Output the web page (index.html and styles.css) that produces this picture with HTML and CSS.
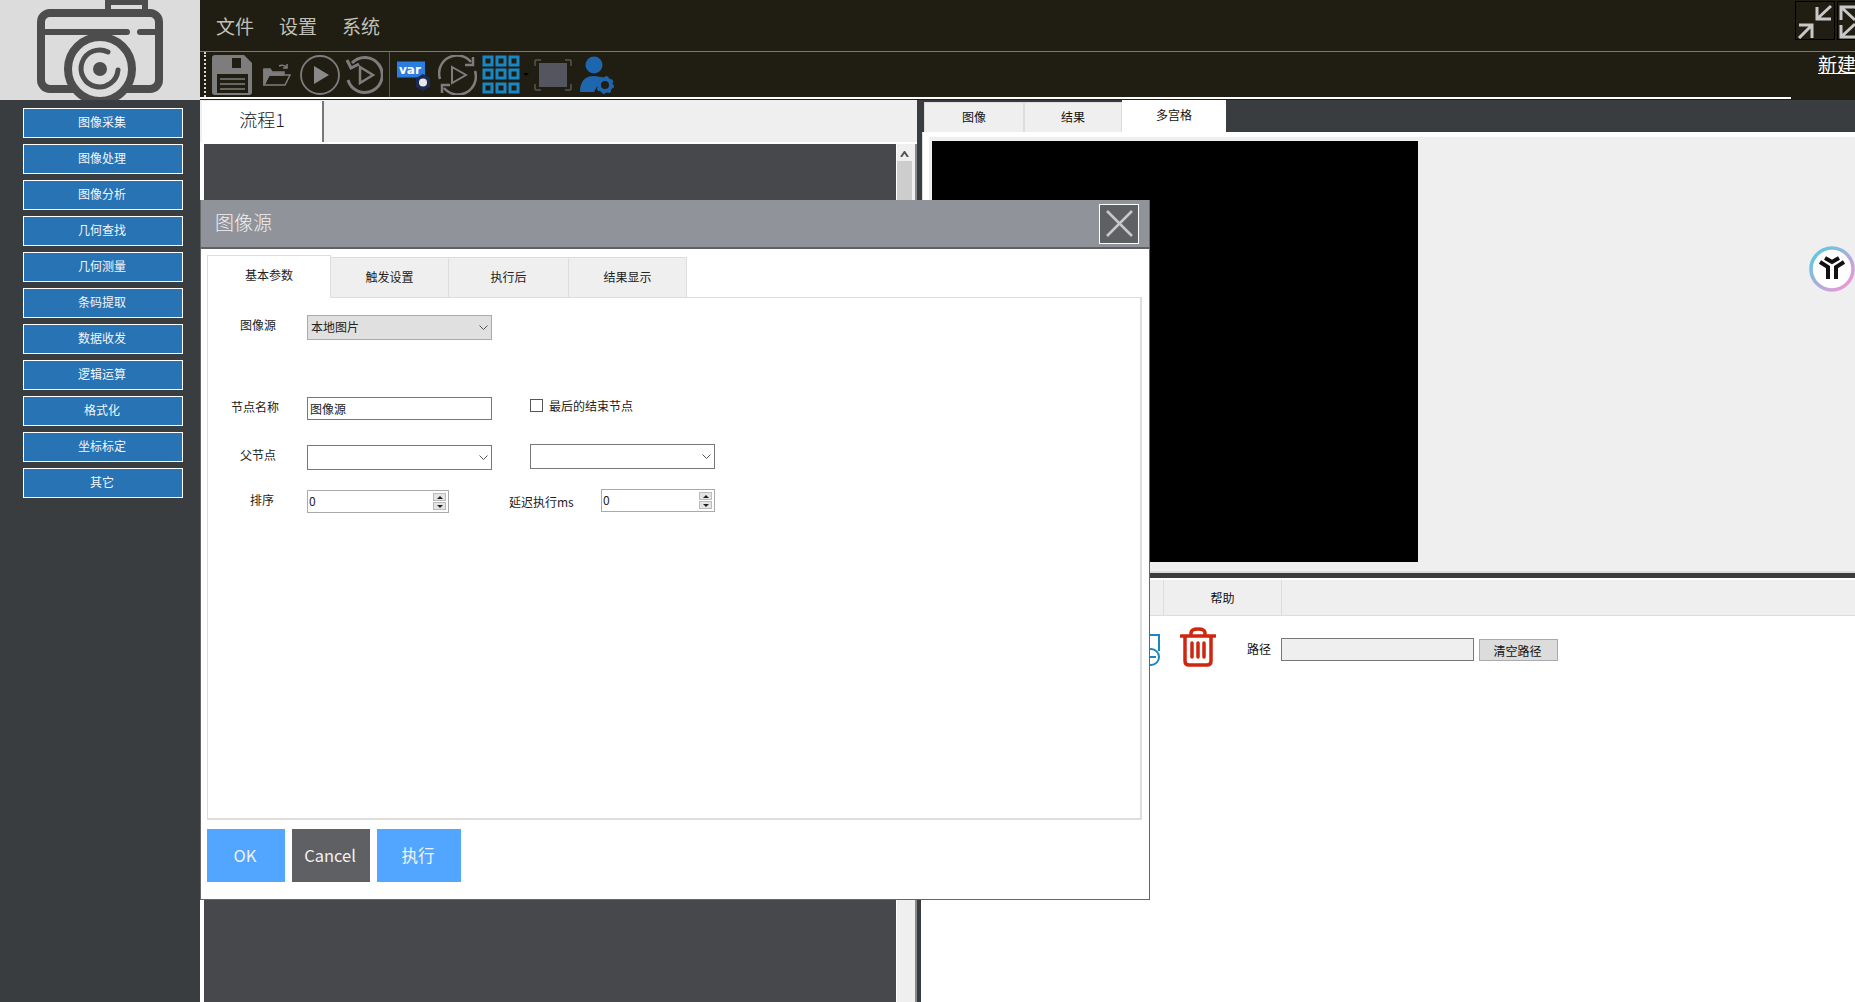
FILE: index.html
```html
<!DOCTYPE html>
<html lang="zh-CN">
<head>
    <meta charset="UTF-8">
    <title>图像源</title>
    <link rel="stylesheet" href="styles.css">
</head>
<body>
    <div class="app">
        <aside class="sidebar">
            <div class="logo">
                <svg width="200" height="100" viewBox="0 0 200 100" fill="none" stroke="#4d4d4d">
                    <path d="M108 9V2H145V9" stroke-width="6"/>
                    <rect x="41" y="13" width="118" height="76" rx="9" stroke-width="8"/>
                    <path d="M45 32H127M140 32H155" stroke-width="6" stroke-linecap="round"/>
                    <circle cx="100" cy="69" r="32" fill="#dcdcdc" stroke-width="8"/>
                    <path d="M108 52A18.500 18.500 0 1 0 118 70" stroke-width="5" stroke-linecap="round"/>
                    <circle cx="100" cy="69" r="7" fill="#4d4d4d" stroke="none"/>
                </svg>
            </div>
            <nav class="tool-list">
                <button class="tool-btn">图像采集</button>
                <button class="tool-btn">图像处理</button>
                <button class="tool-btn">图像分析</button>
                <button class="tool-btn">几何查找</button>
                <button class="tool-btn">几何测量</button>
                <button class="tool-btn">条码提取</button>
                <button class="tool-btn">数据收发</button>
                <button class="tool-btn">逻辑运算</button>
                <button class="tool-btn">格式化</button>
                <button class="tool-btn">坐标标定</button>
                <button class="tool-btn">其它</button>
            </nav>
        </aside>

        <div class="main">
            <header class="header">
                <div class="menubar">
                    <a class="menu-item">文件</a>
                    <a class="menu-item">设置</a>
                    <a class="menu-item">系统</a>
                    <div class="win-btns">
                        <button class="win-btn">
                            <svg width="38" height="37" viewBox="0 0 38 37" fill="none" stroke="#c8c8c8" stroke-width="3">
                                <path d="M21 5V17H35M21 17L35 4"/>
                                <path d="M3 23H16V36M16 23L3 36"/>
                            </svg>
                        </button>
                        <button class="win-btn">
                            <svg width="38" height="37" viewBox="0 0 38 37" fill="none" stroke="#c8c8c8" stroke-width="3">
                                <path d="M3 18V5H17M3 5L17 18"/>
                                <path d="M3 23V35H17M3 35L17 22"/>
                            </svg>
                        </button>
                    </div>
                </div>
                <div class="toolbar">
                    <span class="grip"></span>
                    <svg class="ic ic-save" width="40" height="40" viewBox="0 0 40 40">
                        <path d="M3 0H32L40 8V37Q40 40 37 40H3Q0 40 0 37V3Q0 0 3 0Z" fill="#7d7d7d"/>
                        <rect x="20" y="3" width="9" height="10" fill="#201e12"/>
                        <rect x="5" y="19" width="31" height="19" fill="#201e12"/>
                        <path d="M8 24H33M8 29H33M8 34H33" stroke="#7d7d7d" stroke-width="1.500"/>
                    </svg>
                    <svg class="ic ic-open" width="28" height="24" viewBox="0 0 28 24" fill="none" stroke="#7d7d7d" stroke-width="1.500">
                        <path d="M1 22V6H7L9 9H21V12"/>
                        <path d="M1 22L6 12H27L22 22Z" fill="#201e12"/>
                        <path d="M16 3Q21 1 24 5M24 1V5H20"/>
                        <path d="M1 22V7H7L9 10H20V12H6Z" fill="#7d7d7d"/>
                    </svg>
                    <svg class="ic ic-play" width="40" height="40" viewBox="0 0 40 40" fill="none">
                        <circle cx="20" cy="20" r="19" stroke="#7d7d7d" stroke-width="1.800"/>
                        <path d="M14 11L29 20L14 29Z" fill="#8a8a8a"/>
                    </svg>
                    <svg class="ic ic-replay" width="38" height="40" viewBox="0 0 38 40" fill="none" stroke="#7d7d7d" stroke-width="3">
                        <path d="M7 8A17.500 17.500 0 1 1 3 25"/>
                        <path d="M2 5L6 13L14 9"/>
                        <path d="M15 12L28 20L15 28Z" stroke-width="2.500"/>
                    </svg>
                    <span class="tool-sep"></span>
                    <svg class="ic ic-var" width="37" height="32" viewBox="0 0 37 32">
                        <rect x="1" y="2.500" width="28" height="16" fill="#2b7de0"/>
                        <text x="3" y="14.500" class="var-text">var</text>
                        <path d="M27 15L34 19V28L27 32L20 28V19Z" fill="#1c2a55"/>
                        <circle cx="27" cy="23.500" r="4" fill="#e8e8e8"/>
                    </svg>
                    <svg class="ic ic-loop" width="39" height="40" viewBox="0 0 39 40" fill="none" stroke="#7d7d7d" stroke-width="2.500">
                        <path d="M2 24A18 18 0 0 1 33 7"/>
                        <path d="M37 16A18 18 0 0 1 6 33"/>
                        <path d="M35 2V10H27M4 38V30H12"/>
                        <path d="M14 12L28 20L14 28Z" stroke-width="2"/>
                    </svg>
                    <svg class="ic ic-grid" width="47" height="39" viewBox="0 0 47 39" fill="none" stroke="#1b86c4" stroke-width="3">
                        <rect x="2" y="2" width="8" height="8"/><rect x="15" y="2" width="8" height="8"/><rect x="28" y="2" width="8" height="8"/>
                        <rect x="2" y="15" width="8" height="8"/><rect x="15" y="15" width="8" height="8"/><rect x="28" y="15" width="8" height="8"/>
                        <rect x="2" y="29" width="8" height="8"/><rect x="15" y="29" width="8" height="8"/><rect x="28" y="29" width="8" height="8"/>
                        <path d="M41 18H47L44 21Z" fill="#000" stroke="none"/>
                    </svg>
                    <svg class="ic ic-frame" width="38" height="32" viewBox="0 0 38 32" fill="none">
                        <rect x="5" y="4" width="28" height="24" fill="#55555f"/>
                        <path d="M1 7V2Q1 1 2 1H7M31 1H36Q37 1 37 2V7M37 25V30Q37 31 36 31H31M7 31H2Q1 31 1 30V25" stroke="#555" stroke-width="1.500"/>
                    </svg>
                    <svg class="ic ic-user" width="34" height="38" viewBox="0 0 34 38">
                        <circle cx="14" cy="9" r="8.500" fill="#1e66ae"/>
                        <path d="M0 36Q0 20 14 20Q19 20 22 22L14 36Z" fill="#1e66ae"/>
                        <circle cx="25" cy="29" r="6" fill="none" stroke="#1e66ae" stroke-width="4"/>
                        <circle cx="25" cy="29" r="8" fill="none" stroke="#1e66ae" stroke-width="2" stroke-dasharray="3 3.300"/>
                    </svg>
                    <a class="new-link">新建</a>
                </div>
                <div class="header-rule"></div>
            </header>

            <div class="workspace">
                <section class="flow-panel">
                    <div class="flow-tabs">
                        <div class="flow-tab">流程1</div>
                    </div>
                    <div class="flow-body">
                        <div class="flow-canvas"></div>
                        <div class="scrollbar">
                            <svg class="scroll-up" width="9" height="6" viewBox="0 0 9 6" fill="none" stroke="#555" stroke-width="2"><path d="M1 6L4.500 1L8 6"/></svg>
                            <div class="scroll-thumb"></div>
                        </div>
                    </div>
                </section>

                <section class="view-panel">
                    <div class="view-top">
                        <div class="view-tabs">
                            <div class="view-tab">图像</div>
                            <div class="view-tab">结果</div>
                            <div class="view-tab is-active">多宫格</div>
                        </div>
                        <div class="view-frame">
                            <div class="view-inner">
                                <div class="image-box"></div>
                            </div>
                        </div>
                    </div>
                    <div class="split-bar"></div>
                    <div class="bottom-tabs">
                        <div class="bottom-tab-rest"></div>
                        <div class="bottom-tab">帮助</div>
                    </div>
                    <div class="path-row">
                        <svg class="ic-doc" width="35" height="32" viewBox="0 0 35 32" fill="none" stroke="#1b86c4" stroke-width="2">
                            <path d="M2 1H34V17"/>
                            <circle cx="26" cy="23" r="8"/>
                            <path d="M21 23H31"/>
                        </svg>
                        <svg class="ic-trash" width="36" height="40" viewBox="0 0 36 40" fill="none" stroke="#d0260f" stroke-width="3.500">
                            <path d="M1 9H35" stroke-linecap="round"/>
                            <path d="M11 8V6Q11 2 18 2Q25 2 25 6V8"/>
                            <path d="M5 10V34Q5 38 9 38H27Q31 38 31 34V10"/>
                            <path d="M12 16V30M18 16V30M24 16V30" stroke-linecap="round"/>
                        </svg>
                        <label class="path-label">路径</label>
                        <input class="path-input" type="text">
                        <button class="path-btn">清空路径</button>
                    </div>
                </section>
            </div>
        </div>
    </div>

    <svg class="float-badge" width="48" height="48" viewBox="0 0 48 48" fill="none">
        <defs>
            <linearGradient id="ringGrad" x1="0" y1="0" x2="1" y2="1">
                <stop offset="0.150" stop-color="#66c6dd"/>
                <stop offset="0.850" stop-color="#e59ad8"/>
            </linearGradient>
        </defs>
        <circle cx="24" cy="24" r="21" fill="#fff" stroke="url(#ringGrad)" stroke-width="3.500"/>
        <path d="M12 17L20 22V34M36 17L28 22V34" stroke="#111" stroke-width="4"/>
        <path d="M17 13L24 17L31 13" stroke="#111" stroke-width="4"/>
    </svg>

    <div class="dialog">
        <div class="dialog-title">
            <span>图像源</span>
            <button class="dialog-close">
                <svg width="27" height="27" viewBox="0 0 27 27" fill="none" stroke="#c8c8c8" stroke-width="2.500"><path d="M1 1L26 26M26 1L1 26"/></svg>
            </button>
        </div>
        <div class="dialog-body">
            <div class="dlg-tabs">
                <div class="dlg-tab is-active">基本参数</div>
                <div class="dlg-tab tab-trigger">触发设置</div>
                <div class="dlg-tab tab-after">执行后</div>
                <div class="dlg-tab tab-result">结果显示</div>
            </div>
            <div class="dlg-panel">
                <div class="form-row row-source">
                    <label class="field-label">图像源</label>
                    <div class="combo is-filled">
                        <span>本地图片</span>
                        <svg width="9" height="6" viewBox="0 0 9 6" fill="none" stroke="#555"><path d="M0.500 0.500L4.500 4.500L8.500 0.500"/></svg>
                    </div>
                </div>
                <div class="form-row row-name">
                    <label class="field-label label-name">节点名称</label>
                    <input class="text-input" type="text" value="图像源">
                    <span class="check-box"></span>
                    <label class="check-label">最后的结束节点</label>
                </div>
                <div class="form-row row-parent">
                    <label class="field-label">父节点</label>
                    <div class="combo">
                        <svg width="9" height="6" viewBox="0 0 9 6" fill="none" stroke="#555"><path d="M0.500 0.500L4.500 4.500L8.500 0.500"/></svg>
                    </div>
                    <div class="combo combo-second">
                        <svg width="9" height="6" viewBox="0 0 9 6" fill="none" stroke="#555"><path d="M0.500 0.500L4.500 4.500L8.500 0.500"/></svg>
                    </div>
                </div>
                <div class="form-row row-order">
                    <label class="field-label label-order">排序</label>
                    <div class="spin spin-order">
                        <span>0</span>
                        <div class="spin-btns">
                            <i class="spin-up"></i>
                            <i class="spin-down"></i>
                        </div>
                    </div>
                    <label class="delay-label">延迟执行ms</label>
                    <div class="spin spin-delay">
                        <span>0</span>
                        <div class="spin-btns">
                            <i class="spin-up"></i>
                            <i class="spin-down"></i>
                        </div>
                    </div>
                </div>
            </div>
            <div class="dlg-actions">
                <button class="act-btn">OK</button>
                <button class="act-btn act-cancel">Cancel</button>
                <button class="act-btn act-run">执行</button>
            </div>
        </div>
    </div>
</body>
</html>
```

FILE: styles.css
```css
* {
    box-sizing: border-box;
    margin: 0;
    padding: 0;
    font-family: "Noto Sans CJK SC", "Noto Sans", sans-serif;
}

html, body {
    width: 1855px;
    height: 1002px;
    overflow: hidden;
    background: #fff;
}

button {
    cursor: pointer;
}

.app {
    display: flex;
    height: 1002px;
}

/* left tools */
.sidebar {
    width: 200px;
    flex-shrink: 0;
    background: #3a3d40;
}

.logo {
    height: 100px;
    background: #dcdcdc;
    overflow: hidden;
}

.logo svg {
    display: block;
}

.tool-list {
    display: flex;
    flex-direction: column;
    gap: 6px;
    padding: 8px 0 0 23px;
}

.tool-btn {
    width: 160px;
    height: 30px;
    padding: 0 2px 4px 0;
    background: #2873b4;
    border: 1px solid #fff;
    color: #f2f6fa;
    font-size: 12px;
}

/* top */
.main {
    flex: 1;
    min-width: 0;
    display: flex;
    flex-direction: column;
}

.header {
    height: 100px;
    flex-shrink: 0;
    background: #201e12;
    overflow: hidden;
}

.menubar {
    display: flex;
    height: 52px;
    padding-left: 16px;
    gap: 25px;
    border-bottom: 1px solid #7d7c70;
}

.menu-item {
    font-size: 19px;
    line-height: 51px;
    color: #c0c0b8;
}

.win-btns {
    display: flex;
    gap: 2px;
    margin-left: auto;
    margin-right: -22px;
    padding-top: 1px;
}

.win-btn {
    width: 40px;
    height: 39px;
    flex-shrink: 0;
    background: none;
    border: 1px solid #000;
}

.win-btn svg {
    display: block;
}

.toolbar {
    display: flex;
    align-items: center;
    height: 45px;
}

.grip {
    width: 2px;
    height: 45px;
    margin-left: 4px;
    border-left: 2px dotted #d8d8d8;
}

.ic {
    flex-shrink: 0;
}

.ic-save { margin-left: 6px; }
.ic-open { margin-left: 11px; }
.ic-play { margin-left: 9px; }
.ic-replay { margin-left: 5px; }
.ic-var { margin-left: 6px; }
.ic-loop { margin-left: 5px; }
.ic-grid { margin-left: 5px; }
.ic-frame { margin-left: 5px; }
.ic-user { margin-left: 8px; }

.var-text {
    font-family: "DejaVu Sans", sans-serif;
    font-size: 12px;
    font-weight: bold;
    fill: #fff;
}

.tool-sep {
    width: 1px;
    height: 45px;
    margin-left: 6px;
    background: #5c5b50;
}

.new-link {
    align-self: flex-start;
    margin-left: auto;
    margin-right: -1px;
    font-size: 19px;
    line-height: 24px;
    color: #fff;
    text-decoration: underline;
}

.header-rule {
    height: 2px;
    width: 1591px;
    background: #fff;
}

/* flow panel */
.workspace {
    flex: 1;
    display: flex;
    min-height: 0;
}

.flow-panel {
    width: 717px;
    flex-shrink: 0;
    display: flex;
    flex-direction: column;
    background: #fff;
}

.flow-tabs {
    height: 44px;
    padding: 1px 0 0 2px;
    background: #efefef;
    border-bottom: 2px solid #fff;
}

.flow-tab {
    width: 122px;
    height: 41px;
    background: #fff;
    border-right: 2px solid #777;
    font-size: 18px;
    font-weight: 300;
    line-height: 36px;
    text-align: center;
    color: #222;
}

.flow-body {
    flex: 1;
    display: flex;
    padding-left: 4px;
}

.flow-canvas {
    flex: 1;
    background: #47484c;
}

.scrollbar {
    width: 21px;
    background: #efefef;
    border-left: 1px solid #fff;
    border-right: 2px solid #8a8a8a;
    padding-top: 7px;
    display: flex;
    flex-direction: column;
    align-items: center;
}

.scroll-up {
    margin: 0 3px 4px 0;
}

.scroll-thumb {
    width: 15px;
    height: 300px;
    margin-right: 3px;
    background: #cdcdcd;
}

/* right panel */
.view-panel {
    flex: 1;
    min-width: 0;
    display: flex;
    flex-direction: column;
    background: #3a3d40;
    padding-left: 5px;
}

.view-top {
    height: 471px;
    display: flex;
    flex-direction: column;
}

.view-tabs {
    display: flex;
    align-items: flex-end;
    height: 32px;
    padding-left: 2px;
    flex-shrink: 0;
}

.view-tab {
    width: 100px;
    height: 30px;
    background: #efefef;
    border: 1px solid #ddd;
    border-bottom: 0;
    font-size: 12px;
    line-height: 28px;
    text-align: center;
    color: #111;
}

.view-tab:nth-child(2) {
    width: 98px;
}

.view-tab.is-active {
    width: 104px;
    height: 32px;
    background: #fff;
    border: 0;
    line-height: 30px;
}

.view-frame {
    flex: 1;
    background: #fff;
    border-left: 1px solid #ddd;
    padding: 5px 0 0 6px;
}

.view-inner {
    height: 100%;
    background: #efefef;
    padding: 4px 0 0 3px;
}

.image-box {
    width: 486px;
    height: 421px;
    background: #000;
}

.split-bar {
    height: 9px;
    border-top: 2px solid #ddd;
    border-bottom: 2px solid #fff;
    background: #3a3d40;
}

.bottom-tabs {
    display: flex;
    height: 36px;
    background: #efefef;
    border-bottom: 1px solid #ddd;
    margin-left: -1px;
}

.bottom-tab-rest {
    width: 243px;
    border-right: 1px solid #ddd;
}

.bottom-tab {
    width: 118px;
    border-right: 1px solid #ddd;
    font-size: 12px;
    line-height: 36px;
    text-align: center;
    color: #111;
}

.path-row {
    flex: 1;
    display: flex;
    align-items: flex-start;
    background: #fff;
    margin-left: -1px;
    padding: 11px 0 0 204px;
}

.ic-doc {
    margin-top: 7px;
    flex-shrink: 0;
}

.ic-trash {
    margin-left: 20px;
    flex-shrink: 0;
}

.path-label {
    margin: 13px 0 0 31px;
    font-size: 12px;
    line-height: 18px;
    color: #111;
}

.path-input {
    width: 193px;
    height: 23px;
    margin: 11px 0 0 10px;
    background: #efefef;
    border: 1px solid #777;
}

.path-btn {
    width: 79px;
    height: 22px;
    margin: 12px 0 0 5px;
    padding-right: 2px;
    background: #dcdcdc;
    border: 1px solid #aaa;
    font-size: 12px;
    color: #111;
}

/* floating badge */
.float-badge {
    position: absolute;
    left: 1808px;
    top: 245px;
}

/* dialog */
.dialog {
    position: absolute;
    left: 200px;
    top: 200px;
    width: 950px;
    height: 700px;
    background: #fff;
    border: 1px solid #666;
    border-top: 0;
    display: flex;
    flex-direction: column;
}

.dialog-title {
    display: flex;
    align-items: center;
    justify-content: space-between;
    height: 49px;
    padding: 0 10px 0 14px;
    background: #90939a;
    border-bottom: 2px solid #5f6063;
    color: #f0f0f0;
    font-size: 19px;
    font-weight: 300;
}

.dialog-title span {
    padding-bottom: 4px;
}

.dialog-close {
    display: flex;
    align-items: center;
    justify-content: center;
    width: 40px;
    height: 40px;
    background: #5f6064;
    border: 1px solid #fff;
}

.dialog-body {
    flex: 1;
    padding: 6px 7px 0 6px;
}

.dlg-tabs {
    display: flex;
    align-items: flex-end;
    height: 43px;
    margin-bottom: -1px;
    position: relative;
}

.dlg-tab {
    width: 118px;
    height: 41px;
    background: #efefef;
    border: 1px solid #ddd;
    border-left: 0;
    font-size: 12px;
    line-height: 38px;
    text-align: center;
    color: #222;
}

.dlg-tab.is-active {
    width: 124px;
    height: 43px;
    background: #fff;
    border-left: 1px solid #ddd;
    border-bottom: 0;
    line-height: 38px;
}

.tab-after { width: 120px; }
.tab-result { width: 118px; }

.dlg-panel {
    height: 523px;
    border: 2px solid #ddd;
    border-top-width: 1px;
    border-left-width: 1px;
}

.form-row {
    display: flex;
    align-items: flex-start;
}

.row-source { margin-top: 17px; }
.row-name { margin-top: 57px; }
.row-parent { margin-top: 25px; }
.row-order { margin-top: 20px; }

.field-label {
    width: 99px;
    padding-left: 32px;
    font-size: 12px;
    line-height: 18px;
    margin-top: 1px;
    color: #222;
}

.label-name {
    padding-left: 23px;
}

.label-order {
    padding-left: 42px;
}

.combo {
    display: flex;
    align-items: center;
    justify-content: flex-end;
    width: 185px;
    height: 25px;
    padding: 0 3px 0 3px;
    background: #fff;
    border: 1px solid #777;
    font-size: 12px;
    color: #222;
}

.combo span {
    margin: 0 auto 2px 0;
}

.combo.is-filled {
    background: #e0e0e0;
    border-color: #aaa;
}

.combo-second {
    margin: -1px 0 0 38px;
}

.text-input {
    width: 185px;
    height: 23px;
    padding-left: 2px;
    border: 1px solid #777;
    outline: none;
    font-size: 12px;
    color: #222;
}

.check-box {
    width: 13px;
    height: 13px;
    margin: 2px 0 0 38px;
    border: 1px solid #555;
    background: #fff;
}

.check-label {
    margin-left: 6px;
    font-size: 12px;
    line-height: 18px;
    color: #222;
}

.spin {
    display: flex;
    align-items: center;
    justify-content: space-between;
    height: 23px;
    padding: 0 2px 0 1px;
    border: 1px solid #aaa;
    font-size: 12px;
    color: #222;
}

.spin span {
    padding-bottom: 2px;
}

.spin-order {
    width: 142px;
}

.spin-delay {
    width: 114px;
    margin: -1px 0 0 27px;
}

.spin-btns {
    display: flex;
    flex-direction: column;
    gap: 1px;
    width: 13px;
}

.spin-btns i {
    display: flex;
    align-items: center;
    justify-content: center;
    height: 8px;
    background: #e4e4e4;
    border: 1px solid #bbb;
}

.spin-up::before {
    content: "";
    border-left: 3px solid transparent;
    border-right: 3px solid transparent;
    border-bottom: 3px solid #222;
}

.spin-down::before {
    content: "";
    border-left: 3px solid transparent;
    border-right: 3px solid transparent;
    border-top: 3px solid #222;
}

.delay-label {
    width: 65px;
    margin: 3px 0 0 60px;
    font-size: 12px;
    line-height: 18px;
    white-space: nowrap;
    color: #222;
}

.dlg-actions {
    display: flex;
    gap: 7px;
    margin-top: 9px;
}

.act-btn {
    width: 78px;
    height: 53px;
    padding: 0 2px 2px 0;
    background: #53a6ff;
    border: none;
    color: #f2f2f2;
    font-size: 16.500px;
}

.act-cancel {
    background: #5f6063;
}

.act-run {
    width: 84px;
}
```
